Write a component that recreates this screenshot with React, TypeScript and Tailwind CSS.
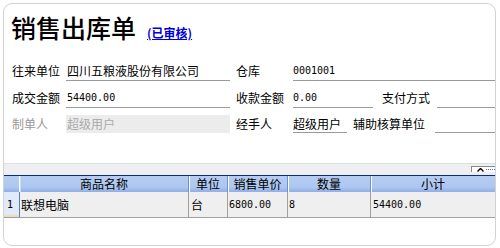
import React from "react";

const mono = "font-['DejaVu_Sans_Mono',monospace] text-[10px]";

function Caret() {
  return (
    <svg width="7" height="4" viewBox="0 0 7 4" className="block">
      <polyline points="0.5,3.5 3.5,0.5 6.5,3.5" fill="none" stroke="#000" strokeWidth="1.4" />
    </svg>
  );
}

export default function App() {
  return (
    <div className="w-[500px] h-[248px] bg-white pl-[3px] pt-[3px] font-['Noto_Sans_CJK_SC',sans-serif] text-[12px] text-black">
      <div className="w-[493px] h-[243px] border border-[#d2d2d2] rounded-[9px] flex flex-col overflow-hidden">
        {/* Title */}
        <div className="flex items-end pl-[7px] pt-[10px]">
          <span className="text-[25px] leading-[26px] font-medium text-black">销售出库单</span>
          <a className="ml-[11px] mb-[1px] text-[12px] leading-[13px] font-bold text-[#0000dd] underline">(已审核)</a>
        </div>

        {/* Form */}
        <div className="flex flex-col pl-[8px] mt-[22px]">
          <div className="flex h-[19px] leading-[18px]">
            <div className="w-[54px]">往来单位</div>
            <div className="w-[164px] border-b border-[#9a9a9a] pl-[1px]">四川五粮液股份有限公司</div>
            <div className="ml-[6px] w-[57px]">仓库</div>
            <div className={`flex-1 border-b border-[#9a9a9a] ${mono}`}>0001001</div>
          </div>
          <div className="flex h-[19px] leading-[18px] mt-[8px]">
            <div className="w-[54px]">成交金额</div>
            <div className={`w-[164px] border-b border-[#9a9a9a] pl-[1px] ${mono}`}>54400.00</div>
            <div className="ml-[6px] w-[57px]">收款金额</div>
            <div className={`w-[80px] border-b border-[#9a9a9a] ${mono}`}>0.00</div>
            <div className="ml-[9px] w-[55px]">支付方式</div>
            <div className="flex-1 border-b border-[#9a9a9a]"></div>
          </div>
          <div className="flex h-[18px] leading-[18px] mt-[7px]">
            <div className="w-[54px] text-[#999999]">制单人</div>
            <div className="w-[164px] bg-[#ececec] pl-[1px] text-[#aaaaaa]">超级用户</div>
            <div className="ml-[6px] w-[57px]">经手人</div>
            <div className="w-[54px] border-b border-[#9a9a9a]">超级用户</div>
            <div className="ml-[6px] w-[82px]">辅助核算单位</div>
            <div className="flex-1 border-b border-[#9a9a9a]"></div>
          </div>
        </div>

        {/* Band with toggle */}
        <div className="mt-[30px] border-t border-[#d6e1e9] bg-[#efefef] h-[12px] flex justify-end pt-[2px]">
          <div className="w-[24px] h-[6px] border-l border-t border-[#8a8a8a] bg-white flex items-center pl-[5px] gap-[2px]">
            <Caret />
            <span className="w-[9px] border-t border-dotted border-[#3a78ff]"></span>
          </div>
        </div>

        {/* Table header */}
        <div className="flex h-[17px] border-t border-[#0a2a8a] bg-[linear-gradient(to_bottom,#b6ccf1_0%,#aec7ef_70%,#8eaee6_100%)] leading-[16px] text-black">
          <div className="w-[15px]"></div>
          <div className="w-[169px] text-center border-l border-[#ffffff] shadow-[inset_1px_0_0_#c9daf6]">商品名称</div>
          <div className="w-[39px] text-center border-l border-[#6f8fcf] shadow-[inset_1px_0_0_#ffffff]">单位</div>
          <div className="w-[60px] text-center border-l border-[#6f8fcf] shadow-[inset_1px_0_0_#ffffff]">销售单价</div>
          <div className="w-[83px] text-center border-l border-[#6f8fcf] shadow-[inset_1px_0_0_#ffffff]">数量</div>
          <div className="flex-1 text-center border-l border-[#6f8fcf] shadow-[inset_1px_0_0_#ffffff]">小计</div>
        </div>

        {/* Table row */}
        <div className="flex h-[26px] bg-[#efefef] border-b border-[#a0a0a0] leading-[25px]">
          <div className={`w-[15px] bg-[linear-gradient(to_bottom,#dfeafa_0%,#dfeafa_86%,#f6d6a2_100%)] pl-[3px] ${mono}`}>1</div>
          <div className="w-[169px] border-l border-[#5a7cc8] pl-[1px]">联想电脑</div>
          <div className="w-[39px] border-l border-[#a0a0a0] pl-[2px]">台</div>
          <div className={`w-[60px] border-l border-[#a0a0a0] pl-[1px] ${mono}`}>6800.00</div>
          <div className={`w-[83px] border-l border-[#a0a0a0] pl-[1px] ${mono}`}>8</div>
          <div className={`flex-1 border-l border-[#a0a0a0] pl-[2px] ${mono}`}>54400.00</div>
        </div>
      </div>
    </div>
  );
}
